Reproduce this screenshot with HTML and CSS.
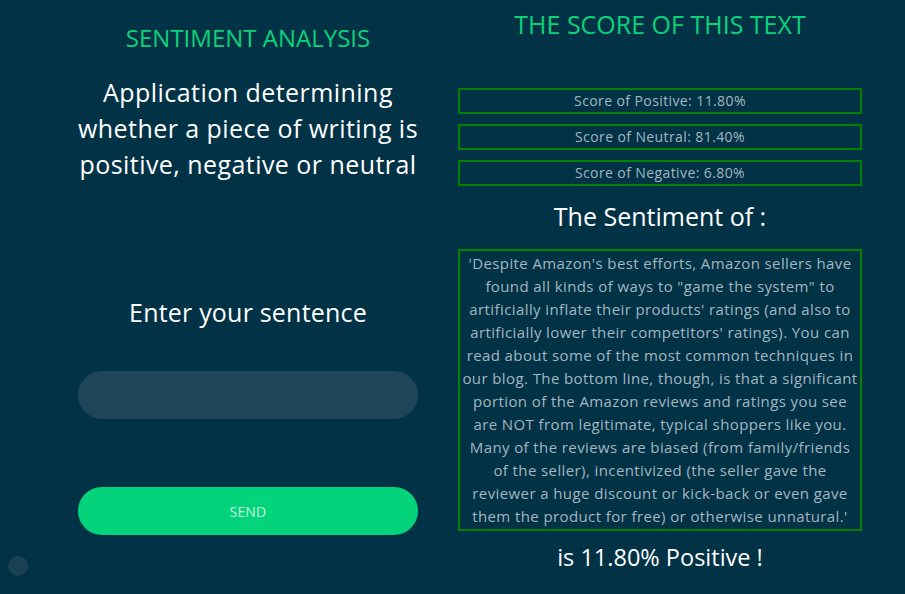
FILE: index.html
```html
<!DOCTYPE html>
<html lang="en">
<head>
<meta charset="utf-8">
<title>Sentiment Analysis</title>
<link rel="stylesheet" href="styles.css">
</head>
<body>
<main class="page">
  <section class="left">
    <h1 class="title title-left">SENTIMENT ANALYSIS</h1>
    <p class="intro">Application determining<br>whether a piece of writing is<br>positive, negative or neutral</p>
    <h2 class="subtitle enter">Enter your sentence</h2>
    <form class="form">
      <input class="field" type="text" aria-label="Sentence">
      <button class="send" type="button">SEND</button>
    </form>
  </section>
  <section class="right">
    <h1 class="title title-right">THE SCORE OF THIS TEXT</h1>
    <div class="scores">
      <div class="score">Score of Positive: 11.80%</div>
      <div class="score">Score of Neutral: 81.40%</div>
      <div class="score">Score of Negative: 6.80%</div>
    </div>
    <h2 class="subtitle sentiment">The Sentiment of :</h2>
    <div class="quote">'Despite Amazon's best efforts, Amazon sellers have<br>found all kinds of ways to "game the system" to<br>artificially inflate their products' ratings (and also to<br>artificially lower their competitors' ratings). You can<br>read about some of the most common techniques in<br>our blog. The bottom line, though, is that a significant<br>portion of the Amazon reviews and ratings you see<br>are NOT from legitimate, typical shoppers like you.<br>Many of the reviews are biased (from family/friends<br>of the seller), incentivized (the seller gave the<br>reviewer a huge discount or kick-back or even gave<br>them the product for free) or otherwise unnatural.'</div>
    <p class="subtitle result">is 11.80% Positive !</p>
  </section>
</main>
<div class="dot"></div>
</body>
</html>
```
FILE: styles.css
```css
* { box-sizing: border-box; }
html, body {
  margin: 0;
  height: 100%;
  overflow: hidden;
}
body {
  background: #013246;
  font-family: "Open Sans", "DejaVu Sans", sans-serif;
  color: #ffffff;
}
.page {
  display: grid;
  grid-template-columns: 340px 404px;
  column-gap: 40px;
  padding-left: 78px;
}
.left, .right {
  display: flex;
  flex-direction: column;
  align-items: stretch;
  text-align: center;
}
.title {
  margin: 0;
  color: #0ad27a;
  font-weight: 500;
  line-height: 30px;
  white-space: nowrap;
}
.title-left {
  font-size: 24px;
  margin-top: 23px;
}
.title-right {
  font-size: 25px;
  margin-top: 9px;
}
.intro {
  margin: 21px -20px 0;
  font-size: 25px;
  letter-spacing: 0.45px;
  line-height: 36px;
  font-weight: 400;
}
.subtitle {
  margin: 0;
  font-weight: 400;
  font-size: 25px;
  line-height: 32px;
  color: #ffffff;
}
.enter {
  margin-top: 112px;
  line-height: 36px;
  letter-spacing: 0.2px;
}
.form {
  display: flex;
  flex-direction: column;
  margin: 41px 0 0;
}
.field {
  height: 48px;
  border: none;
  border-radius: 24px;
  background: #1e4658;
  outline: none;
  padding: 0 24px;
  color: #ffffff;
  font: inherit;
}
.send {
  margin-top: 68px;
  height: 48px;
  border: none;
  border-radius: 24px;
  background: #03d47c;
  color: #c9f5de;
  font-family: inherit;
  font-size: 14px;
  letter-spacing: 0.2px;
}
.scores {
  display: flex;
  flex-direction: column;
  gap: 10px;
  margin-top: 49px;
}
.score {
  height: 26px;
  border: 2px solid #038103;
  font-size: 14px;
  letter-spacing: 0.4px;
  line-height: 21px;
  color: #a4b6c0;
}
.sentiment {
  margin-top: 14px;
}
.quote {
  margin-top: 17px;
  border: 2px solid #038103;
  padding: 1px 0 1px;
  font-size: 15px;
  letter-spacing: 0.4px;
  line-height: 23px;
  color: #a4b6c0;
  white-space: nowrap;
}
.result {
  margin-top: 10px;
  font-size: 23.5px;
}
.dot {
  position: absolute;
  left: 8px;
  top: 556px;
  width: 20px;
  height: 20px;
  border-radius: 50%;
  background: #1b4254;
}
```
